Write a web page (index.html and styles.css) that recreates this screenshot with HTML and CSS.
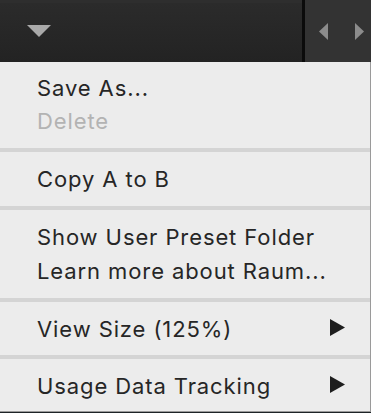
FILE: index.html
```html
<!DOCTYPE html>
<html lang="en">
<head>
<meta charset="utf-8">
<title>Preset menu</title>
<link rel="stylesheet" href="styles.css">
</head>
<body>
<div class="toolbar">
  <div class="toolbar-main">
    <svg class="dropdown-icon" width="24" height="12" viewBox="0 0 24 12"><polygon points="0,0 24,0 12,12" fill="#a9a9a9"/></svg>
  </div>
  <div class="toolbar-divider"></div>
  <div class="toolbar-nav">
    <svg class="nav-icon" width="9" height="17" viewBox="0 0 9 17"><polygon points="9,0 9,17 0,8.5" fill="#8c8c8c"/></svg>
    <svg class="nav-icon" width="9" height="17" viewBox="0 0 9 17"><polygon points="0,0 9,8.5 0,17" fill="#8c8c8c"/></svg>
  </div>
</div>
<div class="menu">
  <div class="menu-section">
    <div class="menu-item short">Save As...</div>
    <div class="menu-item short disabled">Delete</div>
  </div>
  <div class="menu-sep"></div>
  <div class="menu-section">
    <div class="menu-item">Copy A to B</div>
  </div>
  <div class="menu-sep"></div>
  <div class="menu-section">
    <div class="menu-item">Show User Preset Folder</div>
    <div class="menu-item">Learn more about Raum...</div>
  </div>
  <div class="menu-sep"></div>
  <div class="menu-section compact">
    <div class="menu-item submenu">View Size (125%)<svg class="sub-arrow" width="15" height="17" viewBox="0 0 15 17"><polygon points="0,0 15,8.5 0,17" fill="#1e1e1e"/></svg></div>
  </div>
  <div class="menu-sep"></div>
  <div class="menu-section compact">
    <div class="menu-item submenu">Usage Data Tracking<svg class="sub-arrow" width="15" height="17" viewBox="0 0 15 17"><polygon points="0,0 15,8.5 0,17" fill="#1e1e1e"/></svg></div>
  </div>
</div>
</body>
</html>
```
FILE: styles.css
```css
html, body {
  margin: 0;
  padding: 0;
  background: #1d2326;
  width: 371px;
  height: 413px;
  overflow: hidden;
}

.toolbar {
  display: flex;
  height: 62px;
}

.toolbar-main {
  width: 302px;
  background: linear-gradient(#2e2e2e 0, #2e2e2e 3px, #2b2b2b 3px, #232323 100%);
  display: flex;
  align-items: flex-start;
  padding-left: 27px;
  box-sizing: border-box;
}

.dropdown-icon {
  margin-top: 25px;
}

.toolbar-divider {
  width: 3px;
  background: #0b0b0b;
}

.toolbar-nav {
  flex: 1;
  background: #333333;
  display: flex;
  align-items: flex-start;
  padding: 23px 0 0 14px;
  gap: 27px;
}

.menu {
  width: 370px;
  background: #ececec;
  border-right: 1px solid #9a9a9a;
  border-bottom: 1px solid #9a9a9a;
  height: 349px;
  font-family: "Inter", "Liberation Sans", sans-serif;
  font-size: 22px;
  letter-spacing: 0.9px;
  color: #262626;
}

.menu-section {
  padding: 10px 0;
}

.menu-section.compact {
  padding: 10px 0 9px;
}

.menu-item {
  line-height: 34px;
  height: 34px;
  padding-left: 37px;
  padding-right: 25px;
  display: flex;
  align-items: center;
  justify-content: space-between;
  white-space: nowrap;
}

.menu-item.short {
  line-height: 33px;
  height: 33px;
}

.menu-item.disabled {
  color: #b3b3b3;
}

.sub-arrow {
  margin-top: -3px;
}

.menu-sep {
  height: 4px;
  background: #d4d4d4;
}
```
